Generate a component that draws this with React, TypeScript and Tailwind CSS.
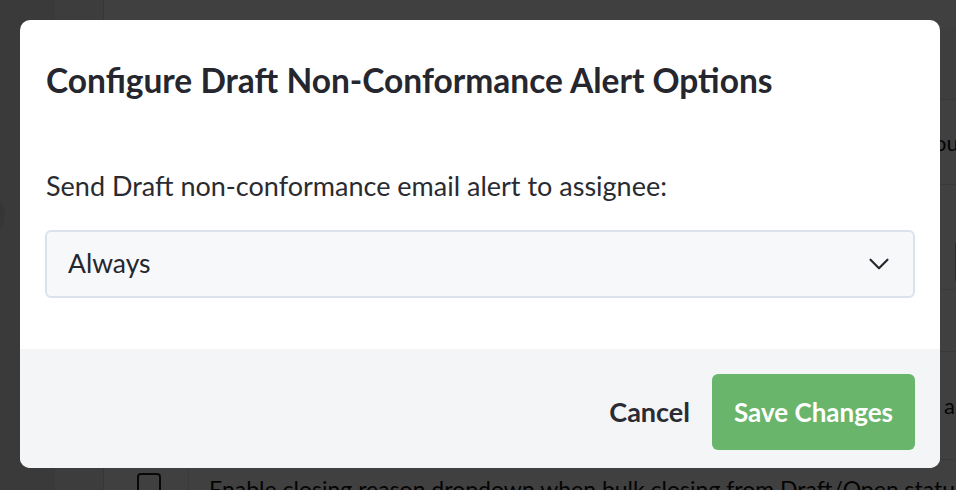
import { ChevronDown } from "lucide-react";

const font = { fontFamily: "Lato, 'Open Sans', sans-serif" };

function BackgroundPage() {
  return (
    <div className="flex h-[490px] w-[956px] overflow-hidden bg-white text-[#111]">
      {/* Sidebar */}
      <div className="relative w-[55px] shrink-0 bg-[#e8e8e8]">
        <div className="absolute -left-[45px] top-[190px] h-[50px] w-[50px] rounded-full bg-[#d6d6d6]" />
      </div>
      <div className="w-[49px] shrink-0 border-r border-[#dcdcdc] bg-[#f3f3f3]" />
      <div className="flex flex-1 flex-col">
        <div className="h-[28px] shrink-0" />
        <div className="h-[72px] shrink-0 border-b border-[#e2e2e2] bg-[#f1f8f1]" />
        <div className="flex h-[85px] shrink-0 items-center justify-end border-b border-[#e2e2e2] text-[22px]">
          <span className="-mr-[6px]">Alert options for group</span>
        </div>
        <div className="flex h-[105px] shrink-0 items-end justify-end border-b border-[#e2e2e2] pb-[4px]">
          <div className="-mr-[40px] h-[46px] w-[50px] rounded-[6px] bg-[#a8a8a8]" />
        </div>
        <div className="h-[62px] shrink-0 border-b border-[#e2e2e2]" />
        <div className="flex h-[108px] shrink-0 items-center justify-end border-b border-[#e2e2e2] text-[22px]">
          <span className="-mr-[2px]">Enable closing reason an</span>
        </div>
        <div className="flex shrink-0">
          <div className="flex w-[85px] shrink-0 justify-center border-r border-[#e2e2e2] pl-[6px] pt-[13px]">
            <div className="h-[24px] w-[24px] rounded-[4px] border-2 border-[#222]" />
          </div>
          <div className="whitespace-nowrap pl-[20px] pt-[12px] text-[23px]">
            Enable closing reason dropdown when bulk closing from Draft/Open status
          </div>
        </div>
      </div>
    </div>
  );
}

export default function App() {
  return (
    <div className="relative h-[490px] w-[956px] overflow-hidden" style={font}>
      <BackgroundPage />
      <div className="absolute inset-0 bg-black/75" />

      <div className="absolute left-[20px] top-[20px] w-[920px] overflow-hidden rounded-[10px] bg-white">
        <div className="px-[26px] pt-[42px]">
          <h2 className="text-[33.5px] font-bold leading-[36px] text-[#25262e]">
            Configure Draft Non-Conformance Alert Options
          </h2>
        </div>

        <div className="px-[25px] pb-[51px] pt-[73px]">
          <label className="block pl-[1px] text-[27px] leading-[30px] text-[#2a2b31]">
            Send Draft non-conformance email alert to assignee:
          </label>
          <div className="mt-[29px] flex h-[68px] items-center justify-between rounded-[6px] border-2 border-[#dbe2ec] bg-[#f6f8fa] pl-[21px] pr-[17px]">
            <span className="text-[26.5px] text-[#25262e]">Always</span>
            <ChevronDown className="h-[34px] w-[34px] text-[#25262e]" strokeWidth={1.5} />
          </div>
        </div>

        <div className="flex items-center justify-end gap-[22px] bg-[#f4f5f7] pb-[18px] pl-[25px] pr-[25px] pt-[25px]">
          <button className="text-[27px] font-bold text-[#2b2c33]">Cancel</button>
          <button className="flex h-[76px] w-[203px] items-center justify-center rounded-[6px] bg-[#69b56b] text-[26px] font-bold text-white">
            Save Changes
          </button>
        </div>
      </div>
    </div>
  );
}
